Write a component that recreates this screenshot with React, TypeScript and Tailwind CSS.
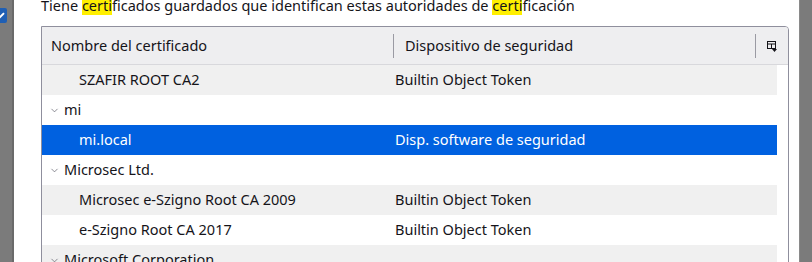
import { ChevronDown } from "lucide-react";

type Row = { name: string; device?: string; group?: boolean; selected?: boolean };

const rows: Row[] = [
  { name: "SZAFIR ROOT CA2", device: "Builtin Object Token" },
  { name: "mi", group: true },
  { name: "mi.local", device: "Disp. software de seguridad", selected: true },
  { name: "Microsec Ltd.", group: true },
  { name: "Microsec e-Szigno Root CA 2009", device: "Builtin Object Token" },
  { name: "e-Szigno Root CA 2017", device: "Builtin Object Token" },
  { name: "Microsoft Corporation", group: true },
];

function ColumnPicker() {
  return (
    <svg width="10" height="11" viewBox="0 0 10 11" className="text-[#15141a]">
      <rect x="0.5" y="0.5" width="8" height="7" fill="none" stroke="currentColor" />
      <line x1="0.5" y1="3" x2="8.5" y2="3" stroke="currentColor" />
      <line x1="4.5" y1="3" x2="4.5" y2="8" stroke="currentColor" />
      <path d="M5 8h5l-2.5 3z" fill="currentColor" />
    </svg>
  );
}

export default function App() {
  return (
    <div className="w-[812px] h-[262px] bg-white flex overflow-hidden text-[#15141a] font-['Noto_Sans','Open_Sans',sans-serif] text-[14.5px]">
      <div className="w-[14px] shrink-0 bg-[#7b7b7b] border-r-2 border-[#6a6a6a] relative">
        <div className="absolute left-0 top-[8px] w-[7px] h-[15px] bg-[#1f5fb4] rounded-r-[2px] flex items-center justify-start overflow-hidden">
          <div className="w-[8px] h-[1.5px] bg-white -rotate-45 -ml-[3px]" />
        </div>
      </div>

      <div className="flex-1 pl-[27px] pr-[10px]">
        <p className="-mt-[5px] leading-[20px] whitespace-nowrap">
          Tiene <span className="bg-[#ffef00]">certi</span>ficados guardados que identifican estas autoridades de{" "}
          <span className="bg-[#ffef00]">certi</span>ficación
        </p>

        <div className="mt-[11px] border border-[#8f8f9d] rounded-tr-[4px] h-[260px] overflow-hidden">
          <div className="h-[38px] bg-[#eeeef0] border-b border-[#d8d8dc] flex items-center">
            <div className="w-[351px] pl-[9px]">Nombre del certificado</div>
            <div className="w-px h-[24px] bg-[#9a9aa3]" />
            <div className="flex-1 pl-[11px]">Dispositivo de seguridad</div>
            <div className="w-px h-[24px] bg-[#9a9aa3]" />
            <div className="w-[32px] flex justify-center pt-[2px]">
              <ColumnPicker />
            </div>
          </div>

          <div className="mr-[11px]">
            {rows.map((r, i) => (
              <div
                key={r.name}
                className={
                  "h-[30px] flex items-center " +
                  (r.selected ? "bg-[#0061e0] text-white" : i % 2 === 0 ? "bg-[#f0f0f0]" : "bg-white")
                }
              >
                {r.group ? (
                  <div className="flex items-center pl-[7px]">
                    <ChevronDown size={11} strokeWidth={1.5} className="text-[#5b5b66]" />
                    <span className="ml-[4px]">{r.name}</span>
                  </div>
                ) : (
                  <>
                    <div className="w-[353px] pl-[37px] whitespace-nowrap">{r.name}</div>
                    <div className="whitespace-nowrap">{r.device}</div>
                  </>
                )}
              </div>
            ))}
          </div>
        </div>
      </div>

      <div className="w-[13px] shrink-0 bg-[#7b7b7b] border-l border-[#8a8a8a]" />
    </div>
  );
}
